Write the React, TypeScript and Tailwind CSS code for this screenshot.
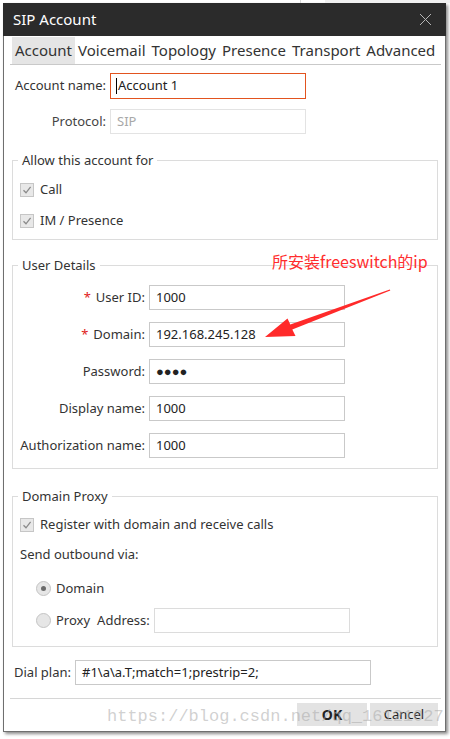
import React from "react";

const font = { fontFamily: '"Noto Sans", "Open Sans", Arial, sans-serif' };

function Check({ label }: { label: string }) {
  return (
    <div className="flex h-[19px] items-center">
      <span className="flex h-[14px] w-[14px] items-center justify-center border border-[#c6c6c6] bg-[#e8e8e8]">
        <svg width="10" height="10" viewBox="0 0 10 10">
          <path d="M1.5 5.2 L4 7.8 L8.6 1.8" fill="none" stroke="#8a8a8a" strokeWidth="1.3" />
        </svg>
      </span>
      <span className="ml-[6px] whitespace-nowrap text-[13px] leading-[19px] text-[#333]">{label}</span>
    </div>
  );
}

function Radio({ on }: { on?: boolean }) {
  return (
    <span className="flex h-[15px] w-[15px] items-center justify-center rounded-full border border-[#c4c4c4] bg-[#e6e6e6]">
      {on && <span className="h-[5px] w-[5px] rounded-full bg-[#6a6a6a]" />}
    </span>
  );
}

function Field({ label, value, star }: { label: string; value: string; star?: boolean }) {
  return (
    <div className="flex h-[25px] items-center">
      <span className="w-[132px] whitespace-nowrap text-right text-[13px] text-[#333]">
        {star && <span className="mr-[5px] text-[#e02020]">*</span>}
        {label}
      </span>
      <div className="ml-[4px] flex h-[25px] w-[196px] items-center border border-[#c9c9c9] bg-white pl-[6px] text-[13px] text-[#222]">
        {value}
      </div>
    </div>
  );
}

export default function App() {
  return (
    <div className="relative h-[739px] w-[450px] overflow-hidden bg-white" style={font}>
      {/* desktop behind */}
      <div className="flex h-[3px]">
        <div className="w-[300px]" />
        <div className="w-[1px] bg-[#d8d8d8]" />
        <div className="w-[24px]" />
        <div className="flex-1 bg-[#f0f0f0]" />
      </div>

      {/* dialog */}
      <div className="ml-[3px] flex h-[729px] w-[443px] flex-col border border-[#6f6f6f] bg-white shadow-[2px_2px_3px_rgba(0,0,0,0.45)]">
        {/* title bar */}
        <div className="-mx-[1px] -mt-[1px] flex h-[33px] items-center justify-between bg-[#2b2b2b] pl-[10px] pr-[14px]">
          <span className="text-[15px] text-white">SIP Account</span>
          <svg width="13" height="13" viewBox="0 0 13 13">
            <path d="M1 1 L12 12 M12 1 L1 12" stroke="#b5b5b5" strokeWidth="1" />
          </svg>
        </div>

        {/* tabs */}
        <div className="ml-[6px] mr-[4px] flex h-[29px] items-end whitespace-nowrap border-b border-[#c9c9c9] pl-[2px] text-[15px] leading-[27px] text-[#333]">
          <span className="h-[27px] bg-[#e5e5e5] px-[3px]">Account</span>
          <span className="px-[3px]">Voicemail</span>
          <span className="px-[3px]">Topology</span>
          <span className="px-[3px]">Presence</span>
          <span className="px-[3px]">Transport</span>
          <span className="px-[3px]">Advanced</span>
        </div>

        <div className="flex flex-col pl-[8px]">
          {/* account name */}
          <div className="mt-[8px] flex h-[25px] items-center">
            <span className="w-[94px] whitespace-nowrap text-right text-[13px] text-[#333]">Account name:</span>
            <div className="ml-[4px] flex h-[26px] w-[196px] items-center border border-[#e2531f] bg-white pl-[5px] text-[13px] text-[#222]">
              <span className="mr-[1px] h-[16px] w-[1px] bg-black" />
              Account 1
            </div>
          </div>
          <div className="mt-[11px] flex h-[25px] items-center">
            <span className="w-[94px] whitespace-nowrap text-right text-[13px] text-[#444]">Protocol:</span>
            <div className="ml-[4px] flex h-[25px] w-[196px] items-center border border-[#e3e3e3] bg-white pl-[6px] text-[13px] text-[#a8a8a8]">
              SIP
            </div>
          </div>

          {/* allow group */}
          <fieldset className="mt-[17px] w-[426px] border border-[#dcdcdc] pb-[9px]">
            <legend className="ml-[5px] px-[4px] text-[13px] leading-[18px] text-[#333]">Allow this account for</legend>
            <div className="mt-[11px] pl-[7px]">
              <Check label="Call" />
            </div>
            <div className="mt-[12px] pl-[7px]">
              <Check label="IM / Presence" />
            </div>
          </fieldset>

          {/* user details */}
          <fieldset className="mt-[16px] w-[426px] border border-[#dcdcdc] pb-[10px]">
            <legend className="ml-[5px] px-[4px] text-[13px] leading-[18px] text-[#333]">User Details</legend>
            <div className="mt-[11px] flex flex-col gap-[12px]">
              <Field label="User ID:" value="1000" star />
              <Field label="Domain:" value="192.168.245.128" star />
              <Field label="Password:" value="●●●●" />
              <Field label="Display name:" value="1000" />
              <Field label="Authorization name:" value="1000" />
            </div>
          </fieldset>

          {/* domain proxy */}
          <fieldset className="mt-[18px] w-[426px] border border-[#dcdcdc] pb-[13px]">
            <legend className="ml-[5px] px-[4px] text-[13px] leading-[18px] text-[#333]">Domain Proxy</legend>
            <div className="mt-[10px] pl-[7px]">
              <Check label="Register with domain and receive calls" />
            </div>
            <div className="mt-[11px] h-[19px] pl-[7px] text-[13px] leading-[19px] text-[#333]">Send outbound via:</div>
            <div className="mt-[12px] flex h-[25px] items-center pl-[23px] text-[13px] text-[#333]">
              <Radio on />
              <span className="ml-[5px]">Domain</span>
            </div>
            <div className="mt-[7px] flex h-[25px] items-center pl-[23px] text-[13px] text-[#333]">
              <Radio />
              <span className="ml-[5px]">Proxy</span>
              <span className="ml-[7px]">Address:</span>
              <div className="ml-[4px] h-[25px] w-[196px] border border-[#dcdcdc] bg-white" />
            </div>
          </fieldset>

          {/* dial plan */}
          <div className="mt-[13px] flex h-[25px] items-center pl-[2px]">
            <span className="whitespace-nowrap text-[13px] text-[#333]">Dial plan:</span>
            <div className="ml-[4px] flex h-[25px] w-[296px] items-center border border-[#c9c9c9] bg-white pl-[6px] text-[13px] text-[#222]">
              #1\a\a.T;match=1;prestrip=2;
            </div>
          </div>
        </div>

        {/* separator */}
        <div className="ml-[6px] mr-[4px] mt-[13px] h-[1px] bg-[#d6d6d6]" />

        {/* buttons */}
        <div className="mr-[7px] mt-[4px] flex justify-end gap-[3px]">
          <div className="flex h-[23px] w-[70px] items-center justify-center bg-[#e3e3e3] text-[14px] font-bold text-[#222]">OK</div>
          <div className="flex h-[23px] w-[68px] items-center justify-center bg-[#e3e3e3] text-[13px] text-[#222]">Cancel</div>
        </div>
      </div>

      {/* annotation overlay */}
      <div className="pointer-events-none absolute left-[272px] top-[251px] text-[16px] leading-[20px] text-[#ff2d2d]" style={{ fontFamily: '"Noto Sans CJK SC", "Noto Sans", sans-serif' }}>
        所安装freeswitch的ip
      </div>
      <svg className="pointer-events-none absolute left-0 top-0" width="450" height="739" viewBox="0 0 450 739">
        <polygon
          points="265,337 287.5,318.5 290.3,324.6 389.8,289.4 390.3,290.6 292.3,329.6 295.5,336"
          fill="#ff2a2a"
        />
      </svg>

      {/* watermark */}
      <div
        className="pointer-events-none absolute left-[107px] top-[705px] text-[17px] leading-[24px] text-[rgba(170,170,170,0.55)]"
        style={{ fontFamily: '"Liberation Mono", "DejaVu Sans Mono", monospace' }}
      >
        https://blog.csdn.net/qq_16121027
      </div>
    </div>
  );
}
